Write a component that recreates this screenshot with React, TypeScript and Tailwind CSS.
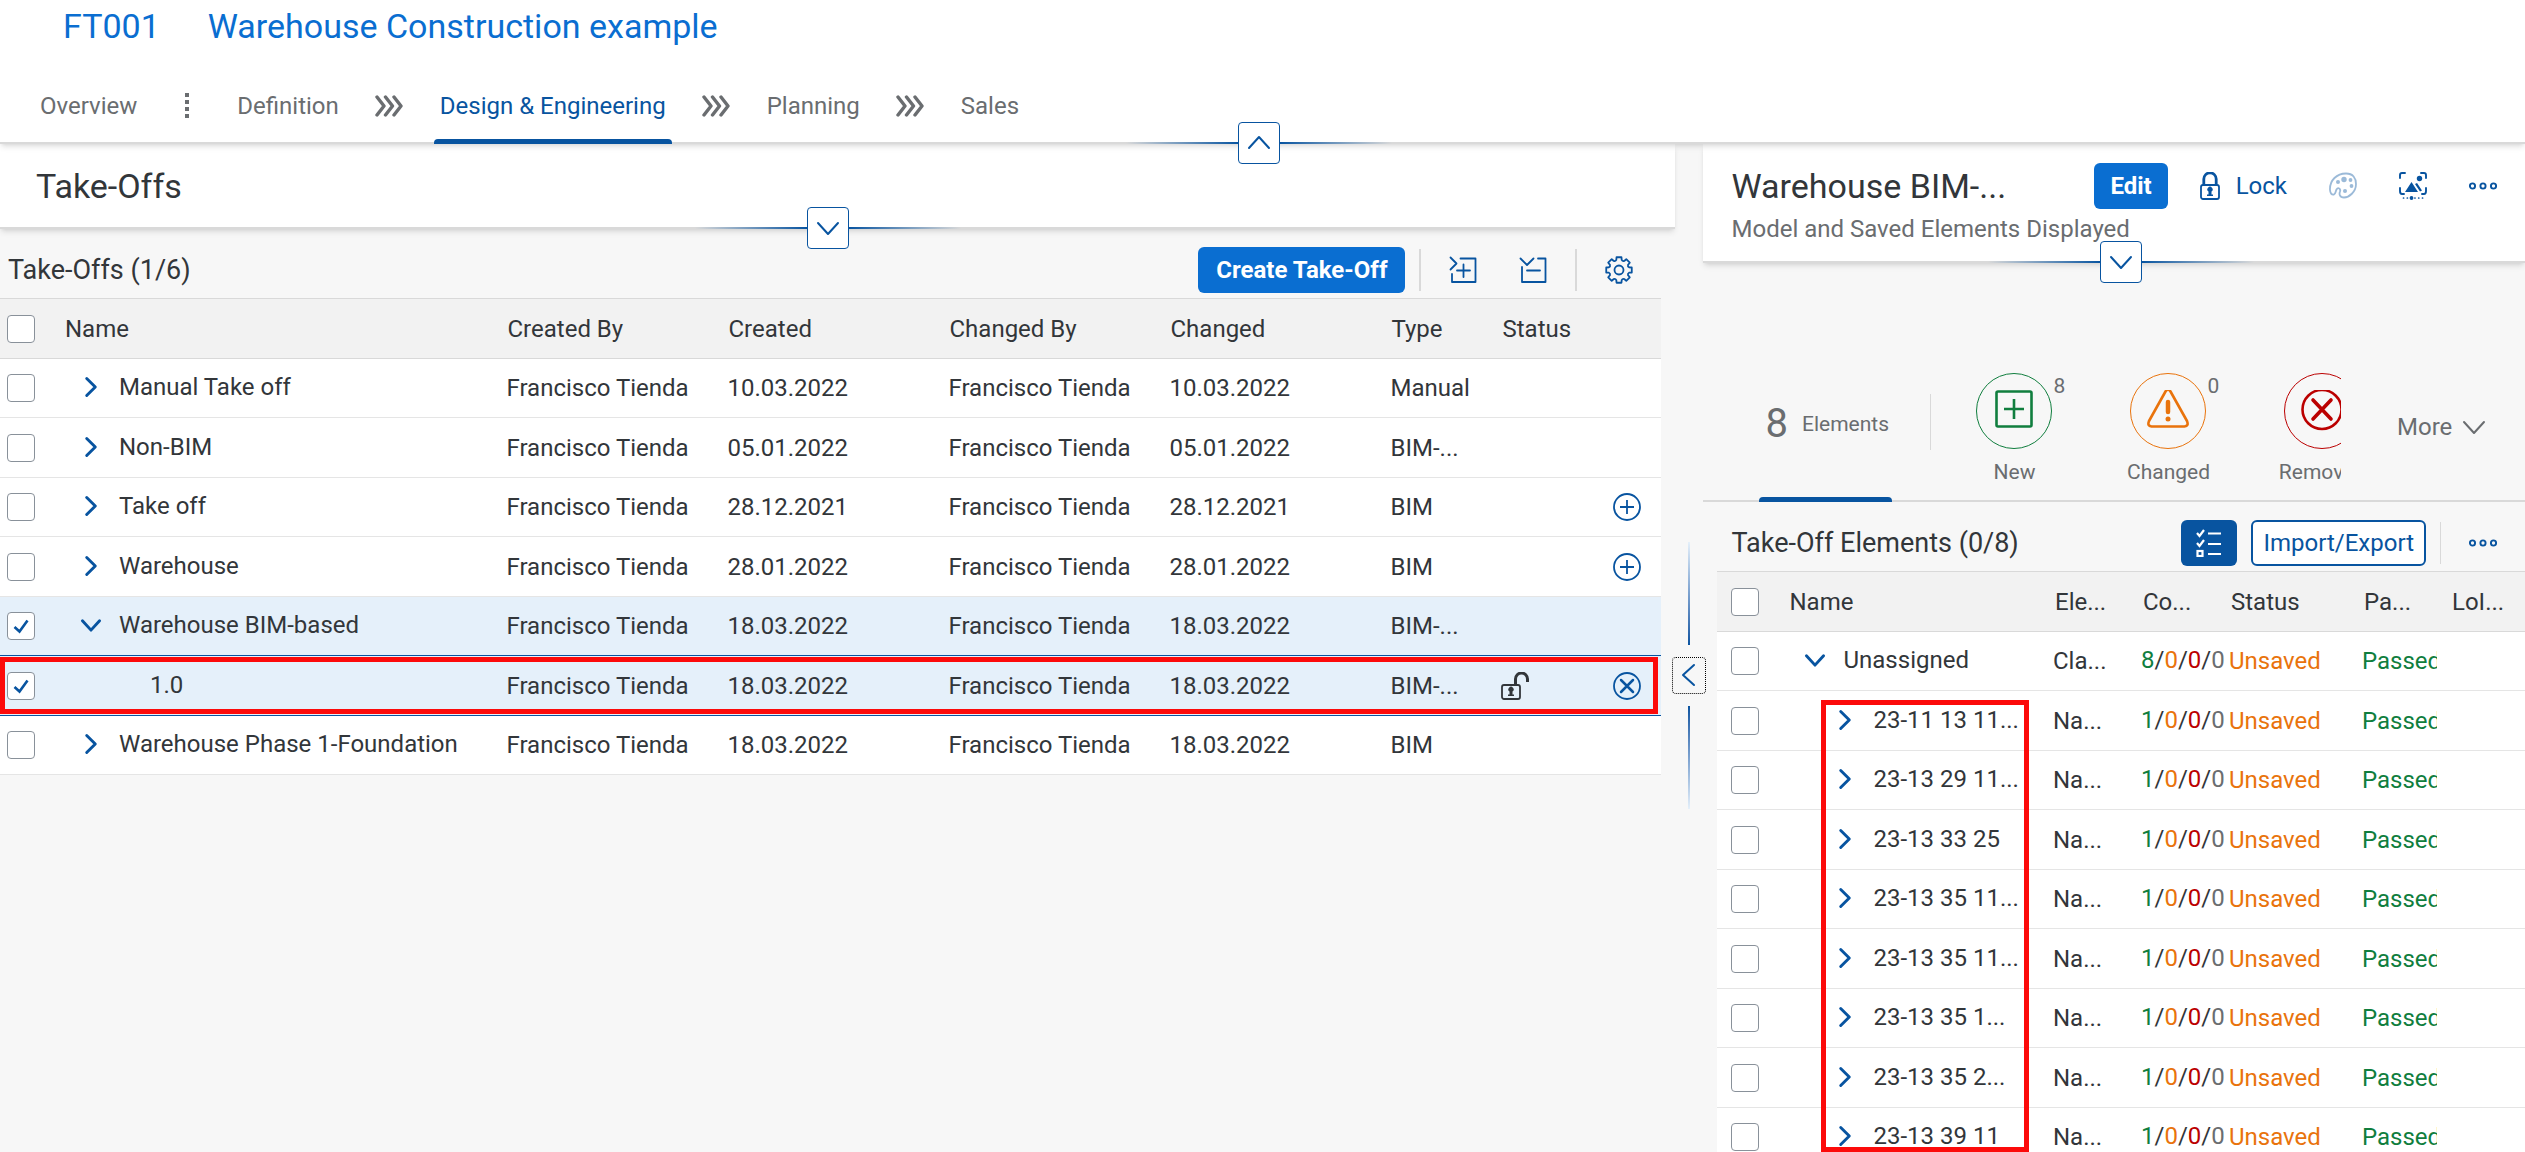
import React, { useState } from 'react';

type IconProps = { className?: string };

const takeOffs = [
  { name: 'Manual Take off', date: '10.03.2022', type: 'Manual' },
  { name: 'Non-BIM', date: '05.01.2022', type: 'BIM-...' },
  { name: 'Take off', date: '28.12.2021', type: 'BIM', action: 'add' },
  { name: 'Warehouse', date: '28.01.2022', type: 'BIM', action: 'add' },
  { name: 'Warehouse BIM-based', date: '18.03.2022', type: 'BIM-...', selected: true, open: true },
  { name: '1.0', date: '18.03.2022', type: 'BIM-...', selected: true, child: true, action: 'remove' },
  { name: 'Warehouse Phase 1-Foundation', date: '18.03.2022', type: 'BIM' },
];

const elements = [
  { name: 'Unassigned', element: 'Cla...', count: 8, root: true },
  { name: '23-11 13 11...', element: 'Na...', count: 1 },
  { name: '23-13 29 11...', element: 'Na...', count: 1 },
  { name: '23-13 33 25', element: 'Na...', count: 1 },
  { name: '23-13 35 11...', element: 'Na...', count: 1 },
  { name: '23-13 35 11...', element: 'Na...', count: 1 },
  { name: '23-13 35 1...', element: 'Na...', count: 1 },
  { name: '23-13 35 2...', element: 'Na...', count: 1 },
  { name: '23-13 39 11', element: 'Na...', count: 1 },
];

// outline of an eight-toothed gear around (14, 14)
const gearPath =
  Array.from({ length: 8 }, (_, i) => {
    const at = (r: number, deg: number) => {
      const a = ((i * 45 + deg) * Math.PI) / 180;
      return `${(14 + r * Math.sin(a)).toFixed(2)} ${(14 - r * Math.cos(a)).toFixed(2)}`;
    };
    return `${i ? 'L' : 'M'}${at(10.4, -15)} L${at(13, -11)} L${at(13, 11)} L${at(10.4, 15)} Q${at(9.2, 22.5)} ${at(10.4, 30)}`;
  }).join(' ') + 'Z';

function Chevron({ className, dir, thin }: IconProps & { dir: 'up' | 'down' | 'left' | 'right'; thin?: boolean }) {
  const d = {
    up: 'M4 19 L14 8 L24 19',
    down: 'M4 9 L14 20 L24 9',
    left: 'M19 4 L8 14 L19 24',
    right: 'M9 4 L19 14 L9 24',
  }[dir];
  return (
    <svg viewBox="0 0 28 28" className={className} fill="none" stroke="currentColor" strokeWidth={thin ? 2 : 3.4} strokeLinecap="round" strokeLinejoin="round">
      <path d={d} />
    </svg>
  );
}

function TripleChevron() {
  return (
    <svg viewBox="0 0 29 22" className="h-[22px] w-[29px] shrink-0" fill="none" stroke="currentColor" strokeWidth="3.400" strokeLinecap="round" strokeLinejoin="round">
      <path d="M2 2 L9 11 L2 20 M10.500 2 L17.500 11 L10.500 20 M19 2 L26 11 L19 20" />
    </svg>
  );
}

function ExpandIcon() {
  return (
    <svg viewBox="0 0 28 28" className="size-7" fill="none" stroke="currentColor" strokeWidth="1.800" strokeLinecap="round" strokeLinejoin="round">
      <path d="M1.500 1.500 L7.500 7.500 L1.500 13.500 M11.500 2.500 H26.500 V26 H3 V18 M14.500 8.500 V21 M8 14.500 H21" />
    </svg>
  );
}

function CollapseIcon() {
  return (
    <svg viewBox="0 0 28 28" className="size-7" fill="none" stroke="currentColor" strokeWidth="1.800" strokeLinecap="round" strokeLinejoin="round">
      <path d="M1.500 2.500 L8 9 L14.500 2.500 M19 2.500 H26.500 V26 H3 V11 M8 14.500 H21" />
    </svg>
  );
}

function GearIcon() {
  return (
    <svg viewBox="0 0 28 28" className="size-7" fill="none" stroke="currentColor" strokeWidth="1.800" strokeLinejoin="round">
      <path d={gearPath} />
      <circle cx="14" cy="14" r="4.500" />
    </svg>
  );
}

function LockIcon() {
  return (
    <svg viewBox="0 0 20 28" className="h-7 w-5" fill="none" stroke="currentColor">
      <path d="M3.800 13 V7 A6.200 6.200 0 0 1 16.200 7 V13" strokeWidth="2.800" />
      <rect x="1" y="13" width="18" height="14" rx="2" strokeWidth="1.800" />
      <path d="M7 24 V22.500 H8.500 V19.500 A2.600 2.600 0 1 1 11.500 19.500 V22.500 H13 V24 Z" fill="currentColor" stroke="none" />
    </svg>
  );
}

function UnlockIcon() {
  return (
    <svg viewBox="0 0 28 28" className="size-7" fill="none" stroke="currentColor">
      <path d="M14.500 13 V7 A6 6 0 0 1 26.500 7 V10" strokeWidth="3" />
      <rect x="1" y="13" width="18" height="14" rx="2" strokeWidth="1.800" />
      <path d="M7 24 V22.500 H8.500 V19.500 A2.600 2.600 0 1 1 11.500 19.500 V22.500 H13 V24 Z" fill="currentColor" stroke="none" />
    </svg>
  );
}

function PaletteIcon() {
  return (
    <svg viewBox="0 0 28 28" className="size-7" fill="none" stroke="currentColor" strokeWidth="1.800">
      <path d="M1 18 C0.500 8 8 1.500 17 1.500 C24 1.500 27 6 27 12 C27 20 20 25.500 15 25.500 C10.500 25.500 10 22 11 19.500 C12 16.500 9 15 7.500 17.500 C6.500 19.500 6.500 22 5 22.500 C2.500 23 1.200 21 1 18 Z" />
      <g fill="currentColor" stroke="none">
        <circle cx="9" cy="10" r="2" />
        <circle cx="15" cy="7.500" r="2.700" />
        <circle cx="21.500" cy="8" r="1.900" />
        <circle cx="22.500" cy="14" r="1.900" />
        <circle cx="16" cy="19" r="2" />
      </g>
    </svg>
  );
}

function ModelImageIcon() {
  return (
    <svg viewBox="0 0 28 28" className="size-7" fill="none" stroke="currentColor" strokeWidth="1.900" strokeLinecap="round">
      <path d="M1 6 V3 Q1 1 3 1 H6 M22 1 H25 Q27 1 27 3 V6 M27 16 V19 Q27 22 25 22 H23 M1 16 V19 Q1 22 3 22 H5" />
      <path d="M6 20 L12.500 10 L19 20 Z M16 12 L18 11 L23 18.500 L21 19.500 Z" fill="currentColor" stroke="none" />
      <circle cx="20.500" cy="6.500" r="2.700" fill="currentColor" stroke="none" />
      <path d="M4.500 26 H24" strokeWidth="1.700" strokeDasharray="0.100 3.700" />
      <circle cx="12.500" cy="26" r="1.900" fill="currentColor" stroke="none" />
    </svg>
  );
}

function OverflowIcon() {
  return (
    <svg viewBox="0 0 28 28" className="size-7" fill="none" stroke="currentColor" strokeWidth="1.900">
      <circle cx="3.500" cy="14" r="2.600" />
      <circle cx="14" cy="14" r="2.600" />
      <circle cx="24.500" cy="14" r="2.600" />
    </svg>
  );
}

function ChecklistIcon() {
  return (
    <svg viewBox="0 0 28 28" className="size-7" fill="none" stroke="currentColor" strokeWidth="2.200">
      <path d="M2 4 L4.500 7 L9 1 M2 14 L4.500 17 L9 11 M13 4.500 H26 M13 15 H26 M13 25 H26" />
      <rect x="2.500" y="22" width="5" height="5" />
    </svg>
  );
}

function RoundIcon({ kind }: { kind: string }) {
  return (
    <svg viewBox="0 0 28 28" className="size-7" fill="none" stroke="currentColor" strokeWidth="1.800">
      <circle cx="14" cy="14" r="13" />
      {kind === 'add' ? <path d="M7 14 H21 M14 7 V21" /> : <path d="M8 8 L20 20 M20 8 L8 20" strokeWidth="2.500" strokeLinecap="round" />}
    </svg>
  );
}

function Checkbox({ label, checked = false }: { label: string; checked?: boolean }) {
  const [on, setOn] = useState(checked);
  return (
    <span className="relative block size-7">
      <input
        type="checkbox"
        aria-label={label}
        checked={on}
        onChange={() => setOn(!on)}
        className="block size-7 appearance-none rounded border border-[#89919a] bg-white"
      />
      {on && (
        <svg viewBox="0 0 28 28" className="pointer-events-none absolute inset-0 size-7 text-[#0854a0]" fill="none" stroke="currentColor" strokeWidth="2.600">
          <path d="M7.500 15 L12.500 19.500 L20.500 8.500" />
        </svg>
      )}
    </span>
  );
}

// Small square toggle that sits on the bottom line of a header
function HeaderToggle({ dir, className }: { dir: 'up' | 'down'; className: string }) {
  return (
    <div className={`pointer-events-none absolute inset-x-0 -bottom-px flex translate-y-1/2 items-center justify-center ${className}`}>
      <span className="h-0.5 w-28 bg-linear-to-l from-[#0854a0] to-transparent" />
      <button
        aria-label={dir === 'up' ? 'Collapse header' : 'Expand header'}
        className="pointer-events-auto flex size-[42px] items-center justify-center rounded border border-[#0854a0] bg-white text-[#0854a0]"
      >
        <Chevron dir={dir} thin className="size-7" />
      </button>
      <span className="h-0.5 w-28 bg-linear-to-r from-[#0854a0] to-transparent" />
    </div>
  );
}

function StatusFilter({ label, count, className, children }: { label: string; count?: number; className: string; children: React.ReactNode }) {
  return (
    <button className="flex w-[154px] shrink-0 flex-col items-center">
      <span className={`relative flex size-[76px] items-center justify-center rounded-full border ${className}`}>
        {children}
        <span className="absolute top-0 left-full ml-0.5 text-[21px] leading-[24px] text-[#6a6d70]">{count}</span>
      </span>
      <span className="mt-2.5 text-[21px] leading-[26px] text-[#6a6d70]">{label}</span>
    </button>
  );
}

function TakeOffTable() {
  return (
    <table className="w-full table-fixed border-collapse text-left">
      <colgroup>
        <col className="w-[52px]" />
        <col />
        <col className="w-[221px]" />
        <col className="w-[221px]" />
        <col className="w-[221px]" />
        <col className="w-[221px]" />
        <col className="w-[111px]" />
        <col className="w-[111px]" />
        <col className="w-[61px]" />
      </colgroup>
      <thead>
        <tr className="h-[60px] border-y border-[#d9d9d9] bg-[#f2f2f2] *:pl-[13px] *:font-normal">
          <th className="pl-[7px]!"><Checkbox label="Select all take-offs" /></th>
          <th>Name</th>
          <th>Created By</th>
          <th>Created</th>
          <th>Changed By</th>
          <th>Changed</th>
          <th>Type</th>
          <th>Status</th>
          <th aria-label="Actions"></th>
        </tr>
      </thead>
      <tbody>
        {takeOffs.map((t) => (
          <tr
            key={t.name}
            className={`relative border-b odd:h-[59px] even:h-[60px] ${t.selected ? 'border-[#0854a0] bg-[#e5f0fa]' : 'border-[#e5e5e5] bg-white'}`}
          >
            <td className="pl-[7px]"><Checkbox label={`Select ${t.name}`} checked={t.selected} /></td>
            <td className="pb-0.5">
              {t.child ? (
                <span className="pl-[98px]">{t.name}</span>
              ) : (
                <span className="flex items-center whitespace-nowrap">
                  <button aria-label="Toggle row" className="mr-4 ml-[27px] text-[#0854a0]">
                    <Chevron dir={t.open ? 'down' : 'right'} className="size-6" />
                  </button>
                  {t.name}
                </span>
              )}
            </td>
            <td className="pl-3">Francisco Tienda</td>
            <td className="pl-3">{t.date}</td>
            <td className="pl-3">Francisco Tienda</td>
            <td className="pl-3">{t.date}</td>
            <td className="pl-3">{t.type}</td>
            <td className="pl-3">{t.child && <UnlockIcon />}</td>
            <td className="pl-[13px]">
              {t.action && (
                <button aria-label={t.action} className="block text-[#0854a0]">
                  <RoundIcon kind={t.action} />
                </button>
              )}
              {t.child && <span className="pointer-events-none absolute inset-y-px right-[3px] left-0 border-[5px] border-[#fc0a0a]" />}
            </td>
          </tr>
        ))}
      </tbody>
    </table>
  );
}

function ElementTable() {
  return (
    <div className="relative min-h-0 flex-1 overflow-hidden">
      <table className="w-full table-fixed border-collapse text-left whitespace-nowrap">
        <colgroup>
          <col className="w-[60px]" />
          <col />
          <col className="w-[88px]" />
          <col className="w-[88px]" />
          <col className="w-[133px]" />
          <col className="w-[88px]" />
          <col className="w-[85px]" />
        </colgroup>
        <thead>
          <tr className="h-[60px] border-y border-[#d9d9d9] bg-[#f2f2f2] *:pl-3 *:font-normal">
            <th className="pl-3.5!"><Checkbox label="Select all elements" /></th>
            <th>Name</th>
            <th>Ele...</th>
            <th>Co...</th>
            <th>Status</th>
            <th>Pa...</th>
            <th>LoI...</th>
          </tr>
        </thead>
        <tbody>
          {elements.map((e, i) => (
            <tr key={i} className="border-b border-[#e5e5e5] bg-white odd:h-[59px] even:h-[60px]">
              <td className="pl-3.5"><Checkbox label={`Select ${e.name}`} /></td>
              <td className="pb-0.5">
                <span className={`flex items-center ${e.root ? 'pl-[26px]' : 'pl-14'}`}>
                  <button aria-label="Toggle row" className="mr-4 text-[#0854a0]">
                    <Chevron dir={e.root ? 'down' : 'right'} className="size-6" />
                  </button>
                  {e.name}
                </span>
              </td>
              <td className="pl-2.5">{e.element}</td>
              <td className="pb-0.5 pl-2.5">
                <span className="text-[#107e3e]">{e.count}</span>/<span className="text-[#e9730c]">0</span>/
                <span className="text-[#bb0000]">0</span>/<span className="text-[#6a6d70]">0</span>
              </td>
              <td className="pl-2.5 text-[#e9730c]">Unsaved</td>
              <td className="pl-2.5 text-[#107e3e]">
                <span className="block w-[75px] overflow-hidden">Passed</span>
              </td>
              <td></td>
            </tr>
          ))}
        </tbody>
      </table>
      <div className="pointer-events-none absolute top-[129px] bottom-0 left-[104px] w-[208px] border-[5px] border-[#fc0a0a]" />
    </div>
  );
}

export default function App() {
  return (
    <div className="flex h-screen flex-col overflow-hidden bg-[#f7f7f7] font-[Roboto,sans-serif] text-[24px] leading-[30px] text-[#32363a]">
      <header className="relative z-20 border-b-2 border-[#d9d9d9] bg-white shadow-md">
        <h1 className="flex h-[52px] items-center gap-12 pl-[63px] text-[34px] text-[#0a6ed1]">
          <span>FT001</span>
          <span>Warehouse Construction example</span>
        </h1>
        <nav className="flex h-[90px] items-center gap-9 pt-[18px] pl-10 text-[#6a6d70]">
          <a href="#overview">Overview</a>
          <svg viewBox="0 0 4 26" className="mx-3 h-[26px] w-1" fill="currentColor">
            <path d="M0 0h4v4H0z M0 7h4v4H0z M0 14h4v4H0z M0 21h4v4H0z" />
          </svg>
          <a href="#definition">Definition</a>
          <TripleChevron />
          <a href="#design" className="relative -mx-1.5 flex h-full items-center px-1.5 text-[#0854a0]">
            Design &amp; Engineering
            <span className="absolute inset-x-0 -bottom-0.5 h-[5px] rounded-t bg-[#0854a0]" />
          </a>
          <TripleChevron />
          <a href="#planning">Planning</a>
          <TripleChevron />
          <a href="#sales">Sales</a>
        </nav>
        <HeaderToggle dir="up" className="pr-2" />
      </header>

      <main className="grid min-h-0 flex-1 grid-cols-[671fr_28px_329fr]">
        <section className="min-w-0">
          <div className="relative z-10 flex h-[85px] items-center border-b-2 border-[#d9d9d9] bg-white pl-9 shadow-md">
            <h2 className="text-[34px]">Take-Offs</h2>
            <HeaderToggle dir="down" className="pr-5" />
          </div>
          <div className="pr-3.5">
            <div className="flex items-center pt-[18px] pb-[5px] pl-2 text-[#0854a0]">
              <h3 className="flex-1 text-[27px] text-[#32363a]">Take-Offs (1/6)</h3>
              <button className="h-[46px] rounded-md bg-[#0a6ed1] px-[18px] font-bold text-white">Create Take-Off</button>
              <span className="ml-3.5 h-[42px] w-0.5 bg-[#d9d9d9]" />
              <button aria-label="Expand all" className="ml-7"><ExpandIcon /></button>
              <button aria-label="Collapse all" className="ml-[42px]"><CollapseIcon /></button>
              <span className="ml-7 h-[42px] w-0.5 bg-[#d9d9d9]" />
              <button aria-label="Settings" className="mr-7 ml-7"><GearIcon /></button>
            </div>
            <TakeOffTable />
          </div>
        </section>

        <div className="relative flex flex-col items-center justify-center gap-3 pt-[54px]">
          <span className="h-[103px] w-0.5 bg-linear-to-t from-[#0854a0] to-[#e5f0fa]" />
          <button
            aria-label="Resize panels"
            className="-mx-1 flex h-[37px] w-[34px] items-center justify-center rounded border border-dotted border-black bg-[#f7f7f7] text-[#0854a0]"
          >
            <Chevron dir="left" thin className="size-7" />
          </button>
          <span className="h-[103px] w-0.5 bg-linear-to-b from-[#0854a0] to-[#e5f0fa]" />
        </div>

        <section className="flex min-h-0 min-w-0 flex-col">
          <div className="relative z-10 border-b-2 border-[#d9d9d9] bg-white pt-[19px] pb-3 pl-7 shadow-md">
            <div className="flex h-[46px] items-center pr-7 text-[#0854a0]">
              <h2 className="flex-1 text-[34px] text-[#32363a]">Warehouse BIM-...</h2>
              <button className="h-[46px] rounded-md bg-[#0a6ed1] px-4 font-bold text-white">Edit</button>
              <button className="ml-8 flex items-center gap-4"><LockIcon /> Lock</button>
              <button aria-label="Colours" disabled className="ml-[42px] opacity-40"><PaletteIcon /></button>
              <button aria-label="Model view" className="ml-[42px]"><ModelImageIcon /></button>
              <button aria-label="More actions" className="ml-[42px]"><OverflowIcon /></button>
            </div>
            <p className="leading-10 text-[#6a6d70]">Model and Saved Elements Displayed</p>
            <HeaderToggle dir="down" className="pl-3.5" />
          </div>

          <div className="flex h-[239px] border-b-2 border-[#d9d9d9] pt-[110px] pl-14 text-[#6a6d70]">
            <button className="-mb-0.5 flex w-[133px] shrink-0 flex-col justify-between">
              <span className="flex h-[102px] items-center gap-3.5 pl-1.5">
                <span className="text-[40px]">8</span>
                <span className="text-[21px]">Elements</span>
              </span>
              <span className="h-[5px] w-full rounded-t bg-[#0854a0]" />
            </button>
            <span className="mt-[21px] mr-1.5 ml-[38px] h-14 w-px shrink-0 bg-[#d9d9d9]" />
            <div className="flex min-w-0 flex-1 items-start overflow-hidden">
              <StatusFilter label="New" count={8} className="border-[#107e3e] text-[#107e3e]">
                <svg viewBox="0 0 42 42" className="size-[42px]" fill="none" stroke="currentColor" strokeWidth="2.600">
                  <rect x="3.500" y="1.500" width="35" height="35" rx="1.500" />
                  <path d="M11 19 H31 M21 9 V29" />
                </svg>
              </StatusFilter>
              <StatusFilter label="Changed" count={0} className="border-[#e9730c] text-[#e9730c]">
                <svg viewBox="0 0 42 42" className="size-[42px]" fill="none" stroke="currentColor" strokeWidth="2.600" strokeLinejoin="round" strokeLinecap="round">
                  <path d="M18.500 1.500 Q21 -2 23.500 1.500 L40 31 Q42 36 37.500 36.500 H4.500 Q0 36 2 31 Z" />
                  <path d="M21 12 V22" strokeWidth="4.500" />
                  <circle cx="21" cy="29" r="2.500" fill="currentColor" stroke="none" />
                </svg>
              </StatusFilter>
              <StatusFilter label="Removed" className="border-[#bb0000] text-[#bb0000]">
                <svg viewBox="0 0 42 42" className="size-[42px]" fill="none" stroke="currentColor" strokeWidth="2.600" strokeLinecap="round">
                  <circle cx="21" cy="19.500" r="19.500" />
                  <path d="M12 10 L30 29 M30 10 L12 29" strokeWidth="3.600" />
                </svg>
              </StatusFilter>
            </div>
            <button className="flex h-[108px] w-[184px] shrink-0 items-center gap-2 pl-14">
              More <Chevron dir="down" thin className="size-7" />
            </button>
          </div>

          <div className="flex min-h-0 flex-1 flex-col pl-3.5">
            <div className="flex items-center pt-[18px] pr-7 pb-[5px] pl-3.5 text-[#0854a0]">
              <h3 className="flex-1 text-[27px] text-[#32363a]">Take-Off Elements (0/8)</h3>
              <button aria-label="Show checklist" className="flex h-[46px] w-14 items-center justify-center rounded-md bg-[#0854a0] text-white">
                <ChecklistIcon />
              </button>
              <button className="ml-3.5 h-[46px] rounded-md border-2 border-[#0854a0] bg-white px-2.5">Import/Export</button>
              <span className="ml-3.5 h-[42px] w-px bg-[#d9d9d9]" />
              <button aria-label="More actions" className="ml-7"><OverflowIcon /></button>
            </div>
            <ElementTable />
          </div>
        </section>
      </main>
    </div>
  );
}
